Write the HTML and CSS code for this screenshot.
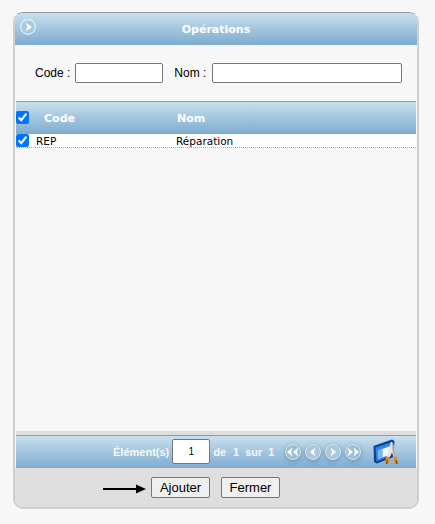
FILE: index.html
```html
<!DOCTYPE html>
<html lang="fr">
  <head>
    <meta charset="UTF-8" />
    <title>Opérations</title>
    <link rel="stylesheet" href="styles.css">
  </head>
  <body>
    <div class="panel">
      <div class="title-bar">
        <svg class="title-icon" width="18" height="18" viewBox="0 0 18 18">
          <circle cx="9" cy="9" r="7.3" fill="#a9c9de" stroke="#e8f1f7" stroke-width="1.2" />
          <path d="M6.5 4.5 L13 9 L6.5 13.5 L8.5 9 Z" fill="#fff" />
        </svg>
        <span>Opérations</span>
      </div>

      <div class="content">
        <form class="filters">
          <label for="code">Code :</label>
          <input class="code-input" type="text" id="code" />
          <label class="nom-label" for="nom">Nom :</label>
          <input class="nom-input" type="text" id="nom" />
        </form>

        <div class="grid-head">
          <input class="head-check" type="checkbox" checked />
          <span class="col-code">Code</span>
          <span class="col-nom">Nom</span>
        </div>
        <div class="grid-row">
          <input class="row-check" type="checkbox" checked />
          <span class="cell-code">REP</span>
          <span class="cell-nom">Réparation</span>
        </div>
      </div>

      <div class="pager">
        <span class="pager-label">Élément(s)</span>
        <input class="page-input" type="text" value="1" />
        <span class="pager-text pager-de">de</span>
        <span class="pager-text">1</span>
        <span class="pager-text">sur</span>
        <span class="pager-text">1</span>
        <div class="pager-nav">
          <svg width="20" height="20" viewBox="0 0 20 20">
            <circle cx="10" cy="10" r="7.5" fill="#9dbdd3" stroke="#d5e5ef" />
            <path d="M9.5 5.5 L4 10 L9.5 14.5 L8 10 Z M15.5 5.5 L10 10 L15.5 14.5 L14 10 Z" fill="#fff" />
          </svg>
          <svg width="20" height="20" viewBox="0 0 20 20">
            <circle cx="10" cy="10" r="7.5" fill="#a9c8dc" stroke="#d5e5ef" />
            <path d="M12.5 5.5 L7 10 L12.5 14.5 L11 10 Z" fill="#fff" />
          </svg>
          <svg width="20" height="20" viewBox="0 0 20 20">
            <circle cx="10" cy="10" r="7.5" fill="#a9c8dc" stroke="#d5e5ef" />
            <path d="M7.5 5.5 L13 10 L7.5 14.5 L9 10 Z" fill="#fff" />
          </svg>
          <svg width="20" height="20" viewBox="0 0 20 20">
            <circle cx="10" cy="10" r="7.5" fill="#9dbdd3" stroke="#d5e5ef" />
            <path d="M4.5 5.5 L10 10 L4.5 14.5 L6 10 Z M10.5 5.5 L16 10 L10.5 14.5 L12 10 Z" fill="#fff" />
          </svg>
        </div>
        <svg class="export-icon" width="26" height="26" viewBox="0 0 26 26">
          <path d="M0.5 7 L19 0.5 L21.5 2 L20.5 18 L4 24.5 L1 23 Z" fill="#0f3f92" />
          <path d="M2.5 8.5 L19 3 L18.5 16.5 L3.5 22.5 Z" fill="#2b86ea" />
          <path d="M5 11.5 L17.5 7 L17 15.5 L5.5 20 Z" fill="#f2f6fc" />
          <path d="M5 11.5 L9.5 10 L9.8 18.3 L5.5 20 Z" fill="#78b2f0" />
          <path d="M18 2.5 L20 4 L21.5 12 L23.5 19 L20.5 18 L19 13.5 L16 19 L13 19 L16 11 Z" fill="#e6e6e6" />
          <path d="M19 4 L20 4 L21.5 12 L23.5 19 L21.5 18.5 L19.5 12 Z" fill="#a8a8a8" />
          <path d="M13 17.5 L16.5 18 L15.5 25 L12 25 Z" fill="#ee8c12" />
          <path d="M20.5 17.5 L24 18 L25.5 25 L21.5 25 Z" fill="#ee8c12" />
          <path d="M13.5 21 L14.8 21 L14.4 25 L13 25 Z M22.5 21 L23.6 21 L24.5 25 L23.3 25 Z" fill="#8a3f05" />
        </svg>
      </div>

      <div class="actions">
        <svg class="arrow" width="44" height="12" viewBox="0 0 44 12">
          <path d="M0 6 H34" stroke="#000" stroke-width="2" />
          <path d="M33 1.5 L43 6 L33 10.5 Z" fill="#000" />
        </svg>
        <button class="btn" type="button">Ajouter</button>
        <button class="btn btn-close" type="button">Fermer</button>
      </div>
    </div>
  </body>
</html>
```

FILE: styles.css
```css
* {
  margin: 0;
  padding: 0;
  box-sizing: border-box;
}
body {
  background-color: #f7f7f7;
  font-family: "Liberation Sans", Arial, sans-serif;
  font-size: 12px;
  color: #000;
  padding: 12px 16px 15px 13px;
  height: 524px;
  overflow: hidden;
}
.panel {
  width: 406px;
  height: 497px;
  display: flex;
  flex-direction: column;
  border: 1px solid #999;
  border-right: 2px solid #cfcfcf;
  border-bottom: 2px solid #cfcfcf;
  border-left: 2px solid #cfcfcf;
  border-radius: 10px;
  overflow: hidden;
  background-color: #f7f7f7;
}
.title-bar {
  height: 32px;
  display: flex;
  align-items: center;
  justify-content: center;
  background: linear-gradient(#c9dfed, #7dacd0);
  color: #fff;
  font-family: "DejaVu Sans", sans-serif;
  font-size: 11px;
  font-weight: bold;
  position: relative;
}
.title-icon {
  position: absolute;
  left: 4px;
  top: 5px;
}
.content {
  flex: 1;
  margin-left: 1px;
  margin-right: 1px;
}
.filters {
  height: 56px;
  display: flex;
  align-items: center;
  padding: 0 0 0 19px;
}
.filters label {
  margin-right: 5px;
}
.filters .nom-label {
  margin-left: 11px;
  margin-right: 6px;
}
.filters input {
  height: 20px;
  border: 1px solid #767676;
  border-radius: 2px;
  background-color: #fff;
}
.code-input {
  width: 88px;
}
.nom-input {
  width: 190px;
}
.grid-head {
  height: 33px;
  display: flex;
  align-items: center;
  border-top: 1px solid #999;
  background: linear-gradient(#c9dfed, #7dacd0);
  color: #fff;
  font-family: "DejaVu Sans", sans-serif;
  font-size: 11px;
  font-weight: bold;
}
.grid-row {
  height: 14px;
  display: flex;
  align-items: center;
  background-color: #fff;
  border-bottom: 1px dotted #aaa;
  font-family: "DejaVu Sans", sans-serif;
  font-size: 10.5px;
}
.head-check,
.row-check {
  width: 13px;
  height: 13px;
  flex: none;
  accent-color: #0075ff;
}
.head-check {
  margin-bottom: 2px;
}
.col-code {
  margin-left: 15px;
  width: 133px;
}
.cell-code {
  margin-left: 7px;
  width: 140px;
}
.pager {
  height: 33px;
  flex: none;
  display: flex;
  align-items: center;
  margin: 0 1px;
  padding-left: 97px;
  border-top: 1px solid #999;
  box-shadow: 0 -4px 0 #dedede;
  background: linear-gradient(#c9dfed, #7dacd0);
  color: #f4f8fb;
  font-weight: bold;
  font-size: 11px;
}
.page-input {
  width: 38px;
  height: 25px;
  margin: 0 3px 2px 3px;
  border: 1px solid #767676;
  border-radius: 2px;
  background-color: #fff;
  text-align: center;
  font-family: "Liberation Sans", Arial, sans-serif;
  font-size: 10px;
}
.pager-text {
  margin-right: 6px;
}
.pager-de {
  margin-right: 7px;
}
.pager-nav {
  display: flex;
  margin-left: 3px;
}
.pager-nav svg {
  filter: drop-shadow(0 1px 2px rgba(60, 100, 130, 0.5));
}
.export-icon {
  margin-left: 10px;
}
.actions {
  height: 39px;
  flex: none;
  display: flex;
  align-items: center;
  padding-left: 88px;
  background-color: #dedede;
}
.arrow {
  margin-right: 4px;
  margin-top: 3px;
}
.btn {
  width: 59px;
  height: 21px;
  border: 1px solid #767676;
  border-radius: 2px;
  background-color: #efefef;
  font-family: "Liberation Sans", Arial, sans-serif;
  font-size: 13px;
}
.btn-close {
  margin-left: 11px;
}
```
